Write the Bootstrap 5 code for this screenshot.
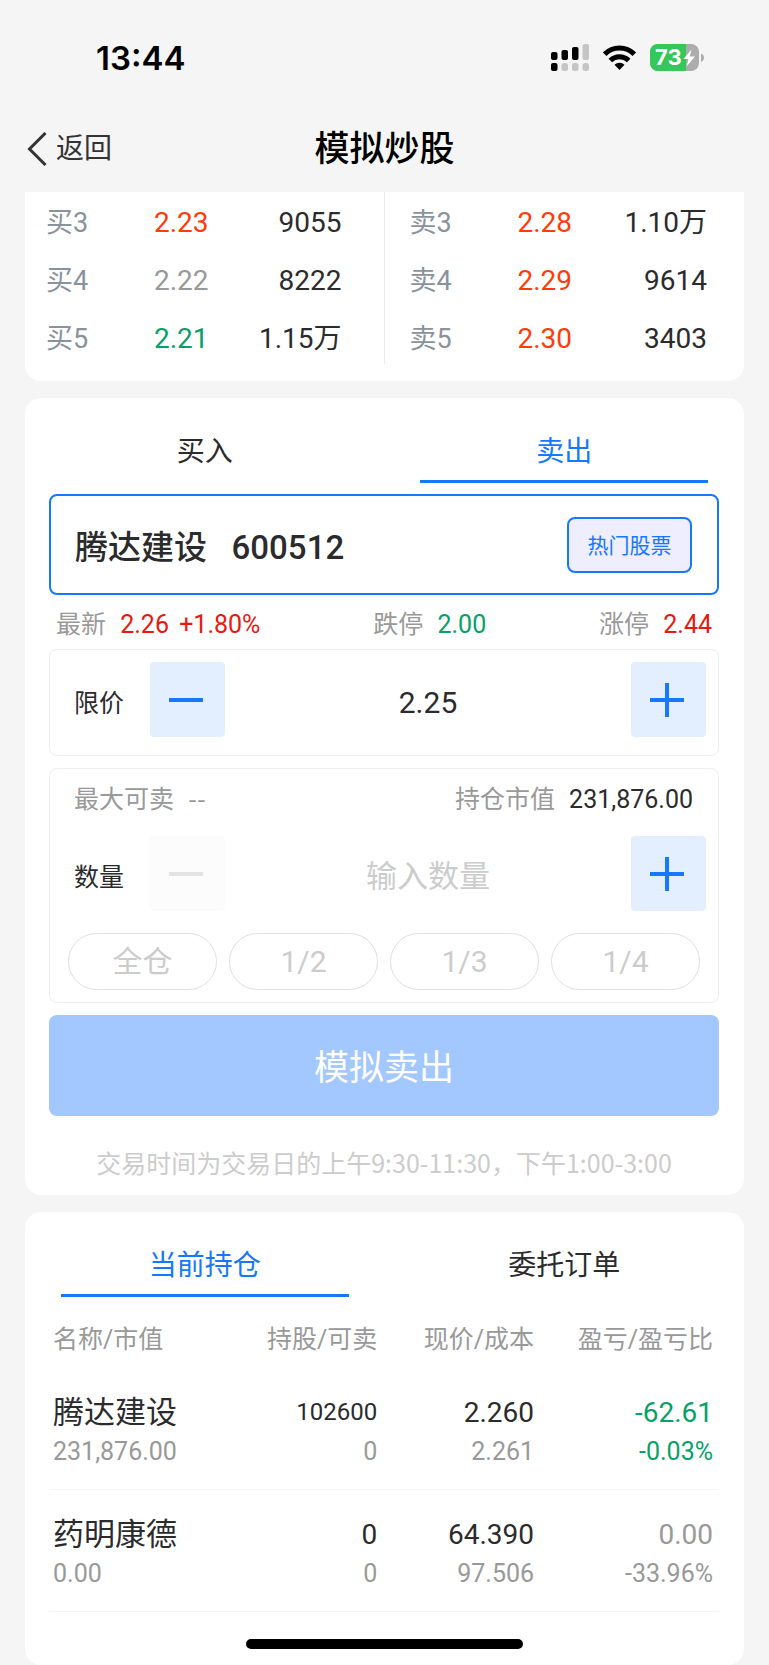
<!DOCTYPE html>
<html lang="zh-CN">
<head>
<meta charset="utf-8">
<meta name="viewport" content="width=device-width, initial-scale=1">
<title>模拟炒股</title>
<link href="https://cdn.jsdelivr.net/npm/bootstrap@5.3.0/dist/css/bootstrap.min.css" rel="stylesheet">
<style>
  :root { --blue: #1677ff; --ink: #2b2b2d; --muted: #999; --up: #e8190f; --rise: #ff3b0a; --fall: #07a168; }
  body { background: #f5f5f5; color: var(--ink); font-family: Roboto, "Noto Sans CJK SC", sans-serif; font-size: 25px; line-height: 36px; }
  .status { height: 115px; padding: 0 65px 0 96px; color: #000; }
  .status-icons { gap: 14px; }
  .clock { font: 600 33px/40px Inter, sans-serif; }
  .charge { font: 700 22px/27px Inter, sans-serif; }
  .topbar { height: 77px; padding: 10px 27px 0; }
  .topbar h1 { font-size: 35px; line-height: 50px; font-weight: 500; color: #000; }
  .back { font-size: 28px; line-height: 48px; color: #333; gap: 9px; }
  .panel { background: #fff; border-radius: 16px; margin: 0 25px 17px; }
  .quotes { border-radius: 0 0 16px 16px; padding-bottom: 17px; }
  .side { width: 50%; padding: 2px 37px 0 25px; height: 172px; }
  .side.buy { border-right: 1px solid #ececec; padding: 2px 42px 0 21px; }
  .quote { height: 58px; font-size: 28px; }
  .quote .level { width: 108px; color: #8a929b; font-size: 27px; }
  .rise { color: var(--rise); } .fall { color: var(--fall); } .up { color: var(--up); } .flat { color: var(--muted); } .ink { color: var(--ink); }
  .tabs { padding-top: 26px; }
  .tabs button { border: 0; background: none; padding: 0; font-size: 28px; line-height: 56px; color: var(--ink); }
  .tabs button::after { content: ""; display: block; width: 80%; height: 3px; margin: 0 auto; }
  .tabs button.active { color: var(--blue); }
  .tabs button.active::after { background: var(--blue); }
  .trade { padding: 0 25px 0 24px; }
  .stock { height: 101px; margin-top: 11px; border: 2px solid var(--blue); border-radius: 8px; padding: 0 25px 0 24px; }
  .field { border: 0; outline: 0; background: none; padding: 6px 0 0; min-width: 0; color: var(--ink); }
  .stock .field { font-size: 33px; line-height: 48px; font-weight: 500; }
  .hot { width: 125px; height: 56px; border: 2px solid var(--blue); border-radius: 8px; background: #eeeefe; color: var(--blue); font-size: 21px; padding: 2px 0 0; flex: none; }
  .info { height: 54px; padding: 6px 7px 0; }
  .box { border: 1px solid #eee; border-radius: 8px; margin-bottom: 12px; }
  .stepper { padding: 12px; }
  .stepper.price { padding-bottom: 18px; }
  .stepper label { width: 88px; padding: 8px 0 0 12px; flex: none; }
  .stepper .field { font-size: 30px; text-align: center; }
  .stepper .amount { font-size: 31px; }
  .field::placeholder { color: #ccc; opacity: 1; }
  .step { width: 75px; height: 75px; border: 0; border-radius: 4px; background: #e3eeff; color: var(--blue); padding: 0 3px 2px 0; flex: none; }
  .step:disabled { background: #fcfcfc; color: #e3e3e3; }
  .limits { padding: 13px 25px 6px 24px; }
  .dash { font-family: "Noto Sans CJK SC", sans-serif; line-height: 1; }
  .shares { padding: 10px 18px 12px; gap: 12px; }
  .shares button { flex: 1 1 0; height: 57px; border: 1px solid #e0e0e0; border-radius: 29px; background: none; color: #ccc; font-size: 30px; padding: 0; }
  .submit { height: 101px; border: 0; border-radius: 8px; background: #a3c7ff; color: #fff; font-size: 35px; padding: 6px 0 0; }
  .hours { color: #ccc; padding: 28px 0 15px; font-family: "Noto Sans CJK SC", sans-serif; }
  .holdings { table-layout: fixed; color: var(--ink); }
  .holdings th, .holdings td { font-weight: 400; text-align: right; vertical-align: top; padding: 0; }
  .holdings th { color: var(--muted); padding-top: 25px; padding-bottom: 10px; }
  .holdings th:first-child, .holdings td:first-child { text-align: left; padding-left: 4px; width: 31%; }
  .holdings th:nth-child(2) { width: 18%; }
  .holdings th:nth-child(3) { width: 24%; }
  .holdings th:nth-child(3), .holdings td:nth-child(3) { padding-right: 4px; }
  .holdings th:last-child, .holdings td:last-child { padding-right: 6px; width: 27%; }
  .holdings td { padding-top: 23px; padding-bottom: 19px; border-bottom: 1px solid #f5f5f5; }
  .holdings td > div:first-child { font-size: 28px; line-height: 43px; height: 43px; }
  .holdings td > .name:first-child { font-size: 31px; }
  .holdings td > .small-qty:first-child { font-size: 24px; }
  .home { bottom: 16px; height: 10px; width: 36%; margin: 0 auto; border-radius: 5px; background: #000; }
</style>
</head>
<body>
<div class="d-flex flex-column min-vh-100">
  <div class="status d-flex align-items-center justify-content-between">
    <span class="clock">13:44</span>
    <span class="status-icons d-flex align-items-center">
      <svg width="38" height="27" viewBox="0 0 38 27" aria-hidden="true">
        <g fill="#000"><rect y="8" width="6.500" height="8" rx="2"/><rect x="10.500" y="6" width="6.500" height="10" rx="2"/><rect x="21" y="3" width="6.500" height="13" rx="2"/><rect y="19" width="6.500" height="8" rx="2"/></g>
        <g fill="#c5c5c5"><rect x="31.500" width="6.500" height="16" rx="2"/><rect x="10.500" y="19" width="6.500" height="8" rx="2.500"/><rect x="21" y="19" width="6.500" height="8" rx="2.500"/><rect x="31.500" y="19" width="6.500" height="8" rx="2.500"/></g>
      </svg>
      <svg width="33" height="25" viewBox="0 0 33 25" aria-hidden="true">
        <g fill="none" stroke="#000" stroke-width="5"><path d="M1.700 9.200a21 21 0 0 1 29.600 0"/><path d="M7.300 15.500a13 13 0 0 1 18.400 0"/></g>
        <path d="M16.500 25l-5-5.200a7.200 7.200 0 0 1 10 0z"/>
      </svg>
      <svg width="54" height="27" viewBox="0 0 54 27" role="img" aria-label="73%">
        <rect width="49" height="27" rx="8" fill="#acacac"/>
        <path d="M8 0H36V27H8a8 8 0 0 1-8-8V8a8 8 0 0 1 8-8z" fill="#34c759"/>
        <path d="M51 9.500c4 1.600 4 6.800 0 8.400z" fill="#acacac"/>
        <text class="charge" x="5" y="21" fill="#fff">73</text>
        <path d="M41.500 5.500L33.500 15h5l-2 7.500L45 12.500h-5.200z" fill="#fff"/>
      </svg>
    </span>
  </div>
  <header class="topbar row g-0 align-items-start">
    <div class="col-4"><a href="#" class="back d-inline-flex align-items-center text-decoration-none">
      <svg width="20" height="34" viewBox="0 0 20 34" fill="none" stroke="#333" stroke-width="3" aria-hidden="true"><path d="M18.500 1L2.500 17l16 16"/></svg>返回</a></div>
    <h1 class="col-4 text-center mb-0">模拟炒股</h1>
  </header>

  <section class="panel quotes d-flex">
    <div class="side buy">
      <div class="quote d-flex align-items-center"><span class="level">买3</span><span class="rise">2.23</span><span class="ms-auto">9055</span></div>
      <div class="quote d-flex align-items-center"><span class="level">买4</span><span class="flat">2.22</span><span class="ms-auto">8222</span></div>
      <div class="quote d-flex align-items-center"><span class="level">买5</span><span class="fall">2.21</span><span class="ms-auto">1.15万</span></div>
    </div>
    <div class="side">
      <div class="quote d-flex align-items-center"><span class="level">卖3</span><span class="rise">2.28</span><span class="ms-auto">1.10万</span></div>
      <div class="quote d-flex align-items-center"><span class="level">卖4</span><span class="rise">2.29</span><span class="ms-auto">9614</span></div>
      <div class="quote d-flex align-items-center"><span class="level">卖5</span><span class="rise">2.30</span><span class="ms-auto">3403</span></div>
    </div>
  </section>

  <section class="panel">
    <div class="tabs d-flex" role="tablist">
      <button type="button" role="tab" class="w-50">买入</button>
      <button type="button" role="tab" class="w-50 active" aria-selected="true">卖出</button>
    </div>
    <form class="trade">
      <div class="stock d-flex align-items-center">
        <input class="field flex-grow-1" type="text" aria-label="股票" value="腾达建设   600512">
        <button type="button" class="hot">热门股票</button>
      </div>
      <div class="info d-flex align-items-center justify-content-between">
        <span class="flat">最新 <span class="up ms-2">2.26</span> <span class="up ms-1">+1.80%</span></span>
        <span class="flat">跌停 <span class="fall ms-2">2.00</span></span>
        <span class="flat">涨停 <span class="up ms-2">2.44</span></span>
      </div>
      <div class="box">
        <div class="stepper price d-flex align-items-center">
          <label for="price">限价</label>
          <button type="button" class="step" aria-label="减少价格"><svg width="34" height="34" fill="currentColor"><path d="M0 15h34v4H0z"/></svg></button>
          <input id="price" class="field flex-grow-1" type="text" value="2.25">
          <button type="button" class="step" aria-label="增加价格"><svg width="34" height="34" fill="currentColor"><path d="M0 15h34v4H0zM15 0h4v34h-4z"/></svg></button>
        </div>
      </div>
      <div class="box">
        <div class="limits d-flex justify-content-between">
          <span class="flat">最大可卖 <span class="dash ms-2">--</span></span>
          <span class="flat">持仓市值 <span class="ink ms-2">231,876.00</span></span>
        </div>
        <div class="stepper d-flex align-items-center">
          <label for="amount">数量</label>
          <button type="button" class="step" aria-label="减少数量" disabled><svg width="34" height="34" fill="currentColor"><path d="M0 15h34v4H0z"/></svg></button>
          <input id="amount" class="field amount flex-grow-1" type="text" placeholder="输入数量">
          <button type="button" class="step" aria-label="增加数量"><svg width="34" height="34" fill="currentColor"><path d="M0 15h34v4H0zM15 0h4v34h-4z"/></svg></button>
        </div>
        <div class="shares d-flex">
          <button type="button">全仓</button><button type="button">1/2</button><button type="button">1/3</button><button type="button">1/4</button>
        </div>
      </div>
      <button type="submit" class="submit w-100">模拟卖出</button>
      <p class="hours text-center mb-0">交易时间为交易日的上午9:30-11:30，下午1:00-3:00</p>
    </form>
  </section>

  <section class="panel flex-grow-1 mb-0">
    <div class="tabs d-flex" role="tablist">
      <button type="button" role="tab" class="w-50 active" aria-selected="true">当前持仓</button>
      <button type="button" role="tab" class="w-50">委托订单</button>
    </div>
    <div class="trade">
      <table class="holdings w-100">
        <thead><tr><th>名称/市值</th><th>持股/可卖</th><th>现价/成本</th><th>盈亏/盈亏比</th></tr></thead>
        <tbody>
          <tr>
            <td><div class="name">腾达建设</div><div class="flat">231,876.00</div></td>
            <td><div class="small-qty">102600</div><div class="flat">0</div></td>
            <td><div>2.260</div><div class="flat">2.261</div></td>
            <td><div class="fall">-62.61</div><div class="fall">-0.03%</div></td>
          </tr>
          <tr>
            <td><div class="name">药明康德</div><div class="flat">0.00</div></td>
            <td><div>0</div><div class="flat">0</div></td>
            <td><div>64.390</div><div class="flat">97.506</div></td>
            <td><div class="flat">0.00</div><div class="flat">-33.96%</div></td>
          </tr>
        </tbody>
      </table>
    </div>
  </section>
</div>
<div class="home fixed-bottom" aria-hidden="true"></div>
<script src="https://cdn.jsdelivr.net/npm/bootstrap@5.3.0/dist/js/bootstrap.bundle.min.js"></script>
</body>
</html>
